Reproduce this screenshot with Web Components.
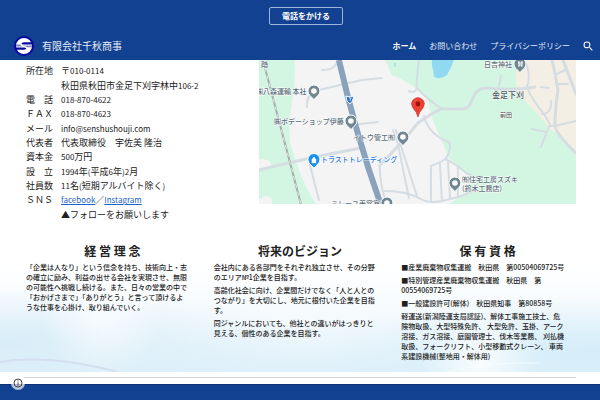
<!DOCTYPE html>
<html lang="ja">
<head>
<meta charset="utf-8">
<meta name="viewport" content="width=device-width, initial-scale=1">
<title>有限会社千秋商事</title>
<style>
html { --brand: #124191; --ink: #212121; }
body { margin: 0; min-height: 100vh; display: flex; flex-direction: column; background: #fff; color: var(--ink); font-family: "Noto Sans CJK JP", "Noto Sans", sans-serif; overflow: hidden; }
main { display: block; }
small { font-size: 8px; }
</style>
</head>
<body>
<site-header>
  <a slot="nav" href="#home" aria-current="page">ホーム</a>
  <a slot="nav" href="#contact">お問い合わせ</a>
  <a slot="nav" href="#privacy">プライバシーポリシー</a>
</site-header>
<main>
  <company-overview>
    <profile-row label="所在地">〒<small>010-0114</small></profile-row>
    <profile-row>秋田県秋田市金足下刈字林中<small>106-2</small></profile-row>
    <profile-row label="電　話"><small>018-870-4622</small></profile-row>
    <profile-row label="ＦＡＸ"><small>018-870-4623</small></profile-row>
    <profile-row label="メール"><small>info@senshushouji.com</small></profile-row>
    <profile-row label="代表者">代表取締役　宇佐美 隆治</profile-row>
    <profile-row label="資本金"><small>500</small>万円</profile-row>
    <profile-row label="設　立"><small>1994</small>年<small>(</small>平成<small>6</small>年<small>)2</small>月</profile-row>
    <profile-row label="社員数"><small>11</small>名<small>(</small>短期アルバイト除く<small>)</small></profile-row>
    <profile-row label="ＳＮＳ"><a href="#facebook">facebook</a>／<a href="#instagram">Instagram</a></profile-row>
    <profile-row>▲フォローをお願いします</profile-row>
    <area-map slot="map"></area-map>
  </company-overview>
  <value-band>
    <value-column heading="経 営 理 念">
      <p>「企業は人なり」という信念を持ち、技術向上・志<br>の確立に励み、利益の出せる会社を実現させ、無限<br>の可能性へ挑戦し続ける。また、日々の営業の中で<br>「おかげさまで」「ありがとう」と言って頂けるよ<br>うな仕事を心掛け、取り組んでいく。</p>
    </value-column>
    <value-column heading="将来のビジョン">
      <p>会社内にある各部門をそれぞれ独立させ、その分野<br>のエリア№1企業を目指す。</p>
      <p>高齢化社会に向け、企業間だけでなく「人と人との<br>つながり」を大切にし、地元に根付いた企業を目指<br>す。</p>
      <p>同ジャンルにおいても、他社との違いがはっきりと<br>見える、個性のある企業を目指す。</p>
    </value-column>
    <value-column heading="保 有 資 格">
      <p>■産業廃棄物収集運搬　秋田県　第00504069725号</p>
      <p>■特別管理産業廃棄物収集運搬　秋田県　第<br>00554069725号</p>
      <p>■一般建設許可(解体)　秋田県知事　第80858号</p>
      <p>軽運送(新潟陸運支局認証)、解体工事施工技士、危<br>険物取扱、大型特殊免許、 大型免許、玉掛、アーク<br>溶接、ガス溶接、庭園管理士、伐木等業務、 刈払機<br>取扱、フォークリフト、小型移動式クレーン、 車両<br>系建設機械(整地用・解体用)</p>
    </value-column>
  </value-band>
</main>
<site-footer></site-footer>

<script>
const define = (name, html, setup) => customElements.define(name, class extends HTMLElement {
  constructor() {
    super();
    this.attachShadow({ mode: 'open' }).innerHTML = html;
    if (setup) setup(this, this.shadowRoot);
  }
});

define('site-header', `
<style>
:host { display: block; background: var(--brand); color: #fff; }
.call { display: flex; justify-content: center; padding: 7px 0; padding-left: 12px; }
button { font-family: inherit; cursor: pointer; }
.call button { height: 18px; padding: 0 12px; border: 1px solid #9fb4d8; border-radius: 2px; background: transparent; color: #fff; font-size: 8px; font-weight: 700; line-height: 16px; }
.bar { display: flex; align-items: center; height: 28px; padding: 0 7px 0 14px; }
.brand { display: flex; align-items: center; gap: 8px; color: #e8edf6; text-decoration: none; font-size: 10px; line-height: 16px; }
.brand svg { width: 20px; height: 20px; }
nav { display: flex; gap: 13px; margin-left: auto; font-size: 8px; line-height: 12px; }
::slotted(a) { color: #e3eaf5; text-decoration: none; }
::slotted([aria-current]) { color: #fff; font-weight: 700; }
.search { display: flex; margin-left: 13px; padding: 0; border: 0; background: none; color: #fff; }
.search svg { width: 10px; height: 10px; }
</style>
<div class="call"><button type="button">電話をかける</button></div>
<div class="bar">
  <a class="brand" href="#home">
    <svg viewBox="0 0 20 20" aria-hidden="true"><circle cx="10" cy="10" r="9" fill="#fff" stroke="#0808a0" stroke-width="2"/><path d="M18 6.300H10Q7.500 6.500 7.500 7.600Q7.600 8.600 9 8.600H18ZM2 11.400H10.500Q12.300 11.600 12.300 12.500Q12.200 13.600 10 13.700H2Z" fill="#0808a0"/><path d="M2 8.500H6.500Q7 10.400 9 10.400H2ZM9 9.600H18V11.300H13Q12 9.800 9 9.800Z" fill="#8088c2"/></svg>
    <span>有限会社千秋商事</span>
  </a>
  <nav><slot name="nav"></slot></nav>
  <button class="search" type="button" aria-label="検索"><svg viewBox="2 2 19 19"><path fill="currentColor" d="M15.5 14h-.79l-.28-.27A6.47 6.47 0 0 0 16 9.5 6.5 6.5 0 1 0 9.5 16c1.61 0 3.09-.59 4.23-1.57l.27.28v.79l5 4.99L20.49 19l-4.99-5zm-6 0a4.5 4.5 0 1 1 0-9 4.5 4.5 0 0 1 0 9z"/></svg></button>
</div>`);

define('company-overview', `
<style>
:host { display: grid; grid-template-columns: 39fr 53fr; padding: 0 24px 0 26px; }
.rows { display: grid; grid-auto-rows: 1fr; padding: 4px 0 13px; min-height: 158px; }
</style>
<div class="rows"><slot></slot></div>
<slot name="map"></slot>`);

define('profile-row', `
<style>
:host { display: grid; grid-template-columns: 27px 1fr; column-gap: 8px; align-items: center; font-size: 9px; line-height: 14px; white-space: nowrap; }
::slotted(a) { color: #1a62c9; font-size: 8px; }
</style>
<span id="label"></span><span><slot></slot></span>`,
  (host, root) => { root.getElementById('label').textContent = host.getAttribute('label') || ''; });

define('area-map', `
<style>
:host { display: block; height: 144px; }
svg { display: block; width: 100%; height: 100%; }
.name { fill: #5b6f7b; font-size: 7px; font-weight: 500; stroke: #fff; stroke-width: 1px; paint-order: stroke; stroke-linejoin: round; }
.shop { fill: #2479dc; }
.area { fill: #4c5054; }
.town { font-size: 8px; }
.block { font-size: 6px; }
</style>
<svg viewBox="0 0 317 144" preserveAspectRatio="xMidYMid slice" role="img" aria-label="地図">
  <defs>
    <g id="pin"><path d="M0 8.500L-4.300 4.200A6 6 0 1 1 4.300 4.200Z" fill="#708691" stroke="#fff" stroke-width="1"/></g>
    <g id="place"><use href="#pin"/><circle r="2.8" fill="#fff"/></g>
  </defs>
  <rect width="317" height="144" fill="#f4f4f5"/>
  <path d="M0 0H36L35 33Q29 55 31 82Q42 122 57 144H13Q14 136 7 136L0 139V111Q12 110 12 104Q11 99 0 99Z" fill="#d2f6e1"/>
  <path d="M126 0H317V144H190Q204 136 210 126Q214 117 190 98L175 63L168 38Q152 22 133 15Z" fill="#d2f6e1"/>
  <path d="M257 0H317V94L298 74L290 69Q281 55 267 42L257 30Z" fill="#f4efe5"/>
  <path d="M173 0H195Q193 6 188 15Q182 20 175 17Q175 11 173 6Z" fill="#91d8f2"/>
  <path d="M136 3v4" stroke="#91d8f2" stroke-width="1"/>
  <g fill="none" stroke="#d5dde3" stroke-width="2" stroke-linecap="round" stroke-linejoin="round">
    <path stroke-width="3" d="M0 110Q48 98 102 88M121 105Q142 84 159 63Q173 53 182 49L205 49Q211 47 213 40C217 31 220 28 228 28Q254 31 276 27"/>
    <path d="M79 0Q76 11 63 10M48 47Q47 34 60 30L103 20L123 18M101 64L119 62M134 70Q137 78 139 84L150 138M137 70L158 136M121 103Q120 119 126 139M51 105L60 140M126 131Q146 131 160 138"/>
    <path d="M160 0Q157 24 158 28Q169 40 182 48M158 28Q156 34 150 31M165 56Q170 75 190 82Q193 87 188 97L186 99Q196 103 206 112L221 120M187 99Q180 103 172 106V142M181 103L183 141L199 137M189 100L191 137M199 107V137Q219 132 219 118M160 138Q169 144 183 141"/>
    <path d="M265 0Q273 13 268 27Q273 40 285 54L291 64L282 87M283 54Q293 54 292 41M273 69L287 72M282 27L290 28M291 66H296L317 61"/>
    <path stroke-width="3" d="M293 0Q296 12 299 30Q296 50 296 66Q298 75 317 93M304 0L317 34"/>
    <path d="M296 15L306 10M299 24H309M242 16L240 26"/>
  </g>
  <path d="M4 0L42 144" stroke="#a8acac" stroke-width="2"/>
  <path d="M4 0L42 144" stroke="#e5e8e6" stroke-width="1" stroke-dasharray="4 4"/>
  <path d="M80 0Q97 75 122 145" fill="none" stroke="#8ba2bd" stroke-width="6"/>
  <path d="M87 36q4 2 8 0q-1 6-4 8q-4-2-4-8Z" fill="#2870ca" stroke="#fff" stroke-width="1"/><path d="M90 38h2l-1 3" fill="none" stroke="#fff" stroke-width=".7"/>
  <use href="#place" x="55" y="31"/><use href="#place" x="92" y="61"/><use href="#place" x="144" y="77"/><use href="#place" x="128" y="143"/><use href="#place" x="196" y="123"/>
  <use href="#pin" x="261" y="4"/><path d="M260 1v6M263 1v6M259 3h5M260 5h3" stroke="#fff" stroke-width="1"/>
  <path d="M55 108L51 104A6 6 0 1 1 59 104Z" fill="#1690f2" stroke="#fff"/><path d="M53 99h4v4h-4ZM54 99v-1q1-2 2 0v1" fill="#fff" stroke="#fff" stroke-width=".4"/>
  <path d="M159 57Q158 52 154 48Q151 43 154 40Q159 35 164 40Q167 43 164 48Q160 52 159 57Z" fill="#ea4335" stroke="#c5221f" stroke-width=".5"/><circle cx="159" cy="44" r="2.400" fill="#a50e0e"/>
  <text class="name" x="-3" y="34">㈱八森運輸 本社</text>
  <text class="name" x="2" y="7">踏</text>
  <text class="name" x="15" y="64">㈱ボデーショップ伊藤</text>
  <text class="name" x="94" y="80">イトウ管工㈲</text>
  <text class="name shop" x="62" y="102">トラストトレーディング</text>
  <text class="name" x="72" y="146">ミレーユ美容室</text>
  <text class="name" x="225" y="7">日吉神社</text>
  <text class="name area town" x="233" y="38">金足下刈</text>
  <text class="name area block" x="241" y="57">前田</text>
  <text class="name" x="203" y="122">㈲住宅工房スズキ</text>
  <text class="name" x="203" y="131">(鈴木工務店)</text>
</svg>`);

define('value-band', `
<style>
:host { display: block; position: relative; background: radial-gradient(circle at 17% 60%, #ffffffb0, #fff0 12%), radial-gradient(circle at 80% 92%, #ffffffd0, #fff0 12%), radial-gradient(ellipse at 0 78%, #d8edf8, #d8edf800 36%), radial-gradient(ellipse at 100% 85%, #d5edf9, #d5edf900 34%), linear-gradient(#fff 20%, #f5fafd 60%, #def0fa); }
svg { position: absolute; inset: 0; width: 100%; height: 100%; }
.columns { position: relative; display: grid; grid-template-columns: repeat(3, 1fr); column-gap: 19px; padding: 6px 30px 8px 26px; }
</style>
<svg viewBox="0 0 600 137" preserveAspectRatio="none" aria-hidden="true"><path d="M0 127Q49 119 118 137" fill="none" stroke="#d5def0" stroke-width="2"/><path d="M445 137Q495 126 540 128" fill="none" stroke="#fff" stroke-width="1" opacity=".5"/></svg>
<div class="columns"><slot></slot></div>`);

define('value-column', `
<style>
:host { display: block; font-size: 7px; line-height: 10px; font-weight: 500; white-space: nowrap; }
h2 { margin: 0 0 1px; padding-left: 4px; font-size: 12px; line-height: 20px; font-weight: 700; text-align: center; }
::slotted(p) { margin: 0 0 3px !important; }
</style>
<h2></h2><slot></slot>`,
  (host, root) => { root.querySelector('h2').textContent = host.getAttribute('heading'); });

define('site-footer', `
<style>
:host { display: flex; flex: 1; flex-direction: column; position: relative; }
hr { width: calc(100% - 48px); height: 1px; margin: 5px auto 6px; border: 0; background: #d2d2d2; }
footer { flex: 1; min-height: 16px; background: var(--brand); border-top: 1px solid #0b2f73; box-sizing: border-box; }
button { position: absolute; left: 11px; top: 4px; width: 14px; height: 14px; padding: 1px; border: 0; border-radius: 50%; background: #ffffffb0; }
button svg { display: block; width: 12px; height: 12px; }
</style>
<hr><footer></footer>
<button type="button" aria-label="ページ情報"><svg viewBox="0 0 12 12"><circle cx="6" cy="6" r="4" fill="none" stroke="#444" stroke-width="1"/><path d="M6 3.500v1M6 5.500v3" stroke="#444"/></svg></button>`);
</script>
</body>
</html>
